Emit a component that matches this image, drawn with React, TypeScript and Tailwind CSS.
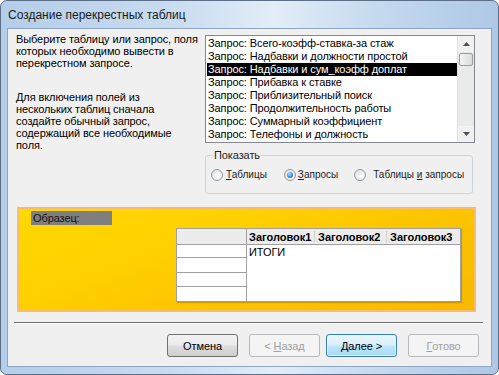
const queries = [
  "Запрос: Всего-коэфф-ставка-за стаж",
  "Запрос: Надбавки и должности простой",
  "Запрос: Надбавки и сум_коэфф доплат",
  "Запрос: Прибавка к ставке",
  "Запрос: Приблизительный поиск",
  "Запрос: Продолжительность работы",
  "Запрос: Суммарный коэффициент",
  "Запрос: Телефоны и должность",
  "Запрос: Фамилии должности и надбавки",
];

function Radio({ checked }: { checked?: boolean }) {
  return (
    <span className="flex h-[12px] w-[12px] shrink-0 items-center justify-center rounded-full border border-[#8e9aa6] bg-[radial-gradient(circle_at_60%_60%,#ffffff_0%,#e4e6e8_70%,#cfd3d6_100%)]">
      {checked && (
        <span className="h-[6px] w-[6px] rounded-full bg-[radial-gradient(circle_at_40%_35%,#bfe3ff_0%,#3c8ad8_55%,#174f8f_100%)]" />
      )}
    </span>
  );
}

function Button({
  children,
  disabled,
  primary,
  className,
}: {
  children: React.ReactNode;
  disabled?: boolean;
  primary?: boolean;
  className?: string;
}) {
  let look =
    "border-[#707070] bg-[linear-gradient(#f2f2f2_0%,#ebebeb_48%,#dddddd_52%,#cfcfcf_100%)] text-black";
  if (disabled) look = "border-[#b5b9bd] bg-[#f4f4f4] text-[#a0a0a0]";
  if (primary)
    look =
      "border-[#3c7fb1] bg-[linear-gradient(#eaf6fd_0%,#d9f0fc_48%,#bee6fd_52%,#a7d9f5_100%)] text-black shadow-[inset_0_0_0_1px_#e5f4fc]";
  return (
    <div
      className={`flex h-[23px] w-[71px] items-center justify-center rounded-[3px] border ${look} ${className ?? ""}`}
    >
      {children}
    </div>
  );
}

export default function App() {
  return (
    <div className="h-[375px] w-[499px] bg-white font-['Liberation_Sans',Arial,sans-serif] text-[11px] leading-[12px] tracking-[-0.1px] text-black">
      <div className="flex h-full flex-col rounded-[7px] border border-[#5c6f86] bg-[linear-gradient(90deg,#b4cde9_0%,#c9dcf1_35%,#e2edf8_55%,#c6daef_75%,#adc8e6_100%)] px-[6px] pb-[7px]">
        {/* title */}
        <div className="flex h-[27px] shrink-0 items-center pl-[1px] text-[12px] tracking-normal text-[#1b1b1b]">
          Создание перекрестных таблиц
        </div>

        {/* client area */}
        <div className="flex flex-1 flex-col border border-[#8ea6c2] bg-[#f0f0f0]">
          <div className="flex">
            <div className="w-[197px] shrink-0 pl-[8px] pt-[4px]">
              <p>
                Выберите таблицу или запрос, поля
                <br />
                которых необходимо вывести в
                <br />
                перекрестном запросе.
              </p>
              <p className="mt-[22px]">
                Для включения полей из
                <br />
                нескольких таблиц сначала
                <br />
                создайте обычный запрос,
                <br />
                содержащий все необходимые
                <br />
                поля.
              </p>
            </div>

            <div className="flex flex-col pt-[6px]">
              {/* list box */}
              <div className="flex h-[108px] w-[270px] border border-[#828790] bg-white">
                <div className="h-[106px] flex-1 overflow-hidden pl-[1px] pt-[1px]">
                  {queries.map((q, i) => (
                    <div
                      key={q}
                      className={`h-[13px] overflow-hidden whitespace-nowrap pl-[1px] leading-[13px] ${
                        i === 2 ? "bg-black text-white" : ""
                      } ${i === 8 ? "max-h-[2px]" : ""}`}
                    >
                      {q}
                    </div>
                  ))}
                </div>
                <div className="flex w-[17px] shrink-0 flex-col border-l border-[#e0e0e0] bg-[#eaeaea]">
                  <div className="flex h-[16px] items-center justify-center border border-[#f3f3f3] bg-[#f0f0f0]">
                    <svg width="7" height="4" viewBox="0 0 7 4">
                      <path d="M0 4 L3.5 0 L7 4 Z" fill="#4d4d4d" />
                    </svg>
                  </div>
                  <div className="mx-[1px] mt-[1px] h-[13px] rounded-[2px] border border-[#9d9d9d] bg-[linear-gradient(90deg,#f3f3f3,#dcdcdc)]" />
                  <div className="flex-1" />
                  <div className="flex h-[16px] items-center justify-center border border-[#f3f3f3] bg-[#f0f0f0]">
                    <svg width="7" height="4" viewBox="0 0 7 4">
                      <path d="M0 0 L3.5 4 L7 0 Z" fill="#4d4d4d" />
                    </svg>
                  </div>
                </div>
              </div>

              {/* group */}
              <fieldset className="mt-[7px] h-[44px] w-[268px] min-w-0 rounded-[3px] border border-[#cbd5dd] pl-[5px] pr-0">
                <legend className="ml-[2px] px-[1px] leading-[11px] text-[#1e1e1e]">Показать</legend>
                <div className="mt-[8px] flex items-center whitespace-nowrap text-[10px] tracking-normal text-[#1e1e1e]">
                  <Radio />
                  <span className="ml-[3px]">
                    <span className="underline">Т</span>аблицы
                  </span>
                  <span className="ml-[17px]">
                    <Radio checked />
                  </span>
                  <span className="ml-[2px]">
                    <span className="underline">З</span>апросы
                  </span>
                  <span className="ml-[16px]">
                    <Radio />
                  </span>
                  <span className="ml-[7px]">
                    Таблицы <span className="underline">и</span> запросы
                  </span>
                </div>
              </fieldset>
            </div>
          </div>

          {/* sample panel */}
          <div className="ml-[9px] mt-[13px] h-[105px] w-[459px] border-2 border-[#f6bd6a] bg-[linear-gradient(160deg,#ffd800_0%,#ffd000_35%,#fcc300_65%,#f9b900_100%)] px-[12px] pt-[2px]">
            <div className="h-[14px] w-[81px] bg-[#7f7f7f] pl-[2px] leading-[14px] text-[#151515]">
              Образец:
            </div>
            <div className="ml-[145px] mt-[3px] flex w-[285px] border border-[#a0a0a0] shadow-[1px_1px_1px_rgba(120,80,0,0.35)]">
              <div className="flex w-[70px] flex-col border-r border-[#a0a0a0]">
                <div className="h-[16px] border-b border-[#a0a0a0] bg-[#ececec]" />
                <div className="h-[13px] border-b border-[#a0a0a0] bg-white" />
                <div className="h-[15px] border-b border-[#a0a0a0] bg-white" />
                <div className="h-[14px] border-b border-[#a0a0a0] bg-white" />
                <div className="h-[14px] bg-white" />
              </div>
              <div className="flex flex-1 flex-col bg-white">
                <div className="flex h-[16px] items-center border-b border-[#a0a0a0] bg-[#ececec] font-bold tracking-normal">
                  <span className="w-[68px] border-r border-[#d0d0d0] pl-[2px]">Заголовок1</span>
                  <span className="w-[72px] border-r border-[#d0d0d0] pl-[3px]">Заголовок2</span>
                  <span className="pl-[3px]">Заголовок3</span>
                </div>
                <div className="pl-[2px] pt-[1px]">ИТОГИ</div>
              </div>
            </div>
          </div>

          {/* separator */}
          <div className="ml-[6px] mt-[10px] w-[469px] border-t border-b border-t-[#6d6d6d] border-b-white" />

          {/* buttons */}
          <div className="ml-[159px] mt-[10px] flex">
            <Button>Отмена</Button>
            <Button disabled className="ml-[11px]">
              &lt;&nbsp;<span className="underline">Н</span>азад
            </Button>
            <Button primary className="ml-[6px] w-[70px]">
              <span className="underline">Д</span>алее &gt;
            </Button>
            <Button disabled className="ml-[11px]">
              <span className="underline">Г</span>отово
            </Button>
          </div>
        </div>
      </div>
    </div>
  );
}
